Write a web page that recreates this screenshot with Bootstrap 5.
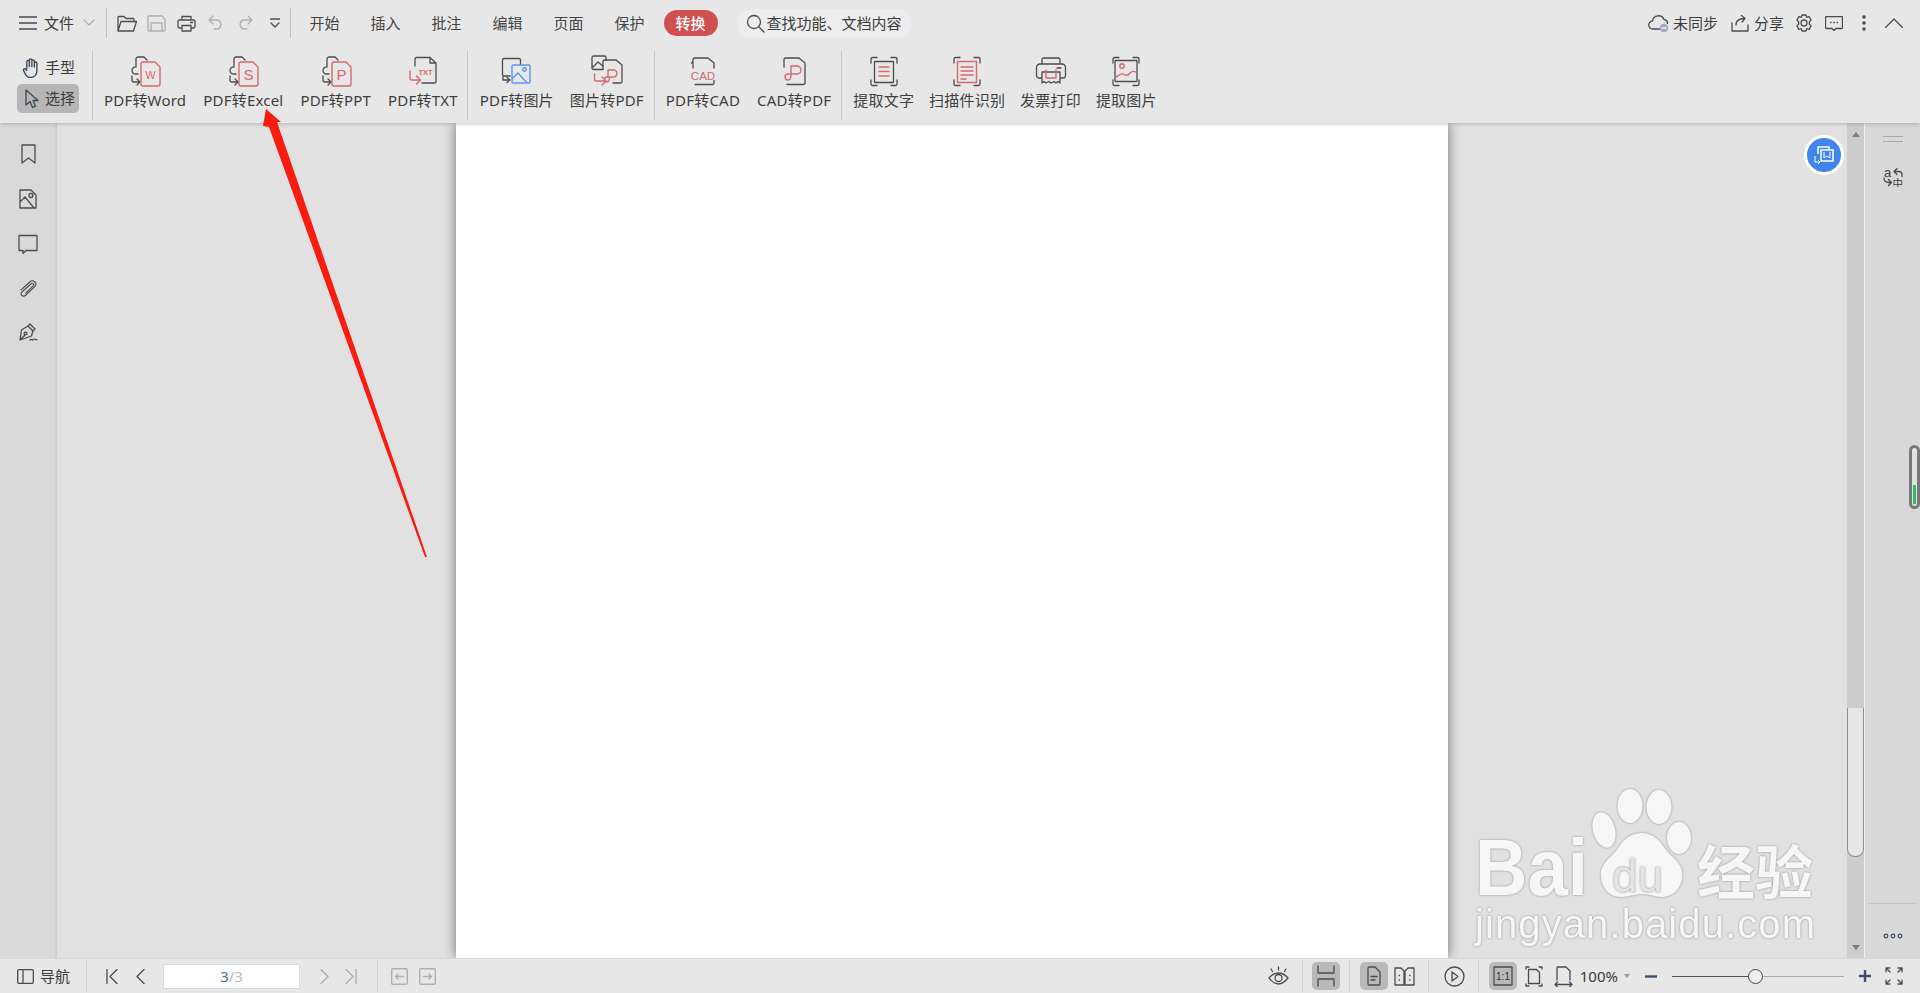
<!DOCTYPE html>
<html lang="zh-CN">
<head>
<meta charset="utf-8">
<title>PDF转换</title>
<link href="https://cdn.jsdelivr.net/npm/bootstrap@5.3.0/dist/css/bootstrap.min.css" rel="stylesheet">
<style>
html,body{height:100%;margin:0;overflow:hidden}
body{font-family:"Noto Sans","Noto Sans CJK SC",sans-serif;font-size:15px;color:#3c3c3c;background:#e7e7e7}
svg{display:block;flex:none}
.app{height:993px;position:relative}
.head{height:123px;background:#e7e7e7;box-shadow:0 1px 4px rgba(0,0,0,.2);position:relative;z-index:2;flex:none}
.line1{height:46px;padding-left:19px;padding-right:17px;line-height:20px}
.line2{height:77px;padding-top:5px}
.vsep{width:1px;background:#c8c8c8;flex:none}
.vsep.t{height:30px;background:#bdbdbd}
.vsep.r{height:69px}
.qa{width:29.6px;flex:none}
.tabx{width:30px;white-space:nowrap;flex:none;color:#444}
.tabs{gap:31px;margin-left:19px}
.pill{width:54px;height:26px;border-radius:13px;background:#d04f50;color:#fff;font-weight:500;margin-left:19px;flex:none}
.seek{width:175px;height:29px;border-radius:15px;background:#ededed;margin-left:19px;padding-left:9px;flex:none;white-space:nowrap}
.sidehand{width:92px;flex:none;padding-left:17px;height:70px;padding-top:2px;gap:2px}
.hs{height:29px;width:62px;border-radius:5px;padding-left:5px;gap:5px}
.hs.on{background:#b6b6b6}
.hs span{width:30px;white-space:nowrap}
.rib{gap:17px;margin:0 10px 0 11px;flex:none}
.rib.ra{margin-right:9px}
.rib.rb{gap:16px;margin-left:12px}
.rib.rd{gap:15px}
.ribitem{height:62px;white-space:nowrap;padding-top:4px}
.ribitem span{line-height:20px;margin-top:3px;color:#3f3f3f;letter-spacing:.2px}
.side{width:57px;flex:none;background:#d9d9d9;border-right:2px solid #cfd0d4;padding-top:21px;gap:25px}
.docarea{background:#e1e1e1;overflow:hidden;position:relative}
.sheet{width:992px;height:100%;background:#fff;box-shadow:0 0 11px rgba(0,0,0,.5)}
.bubble{position:absolute;left:1747px;top:12px;width:40px;height:40px;border-radius:50%;background:#4186f0;border:3px solid #fff}
.wmark{position:absolute;left:1363px;top:637px}
.wmark text{fill:#f6f6f6;font-family:"Liberation Sans",sans-serif;filter:drop-shadow(0 0 1.2px #8f8f8f)}
.wmark .hz{font-family:"Noto Sans CJK SC",sans-serif;font-weight:700}
.track{width:18px;flex:none;background:#ccc;border-right:1px solid #f2f2f2}
.up{padding-top:9px;height:585px}
.thumb{height:149px;background:#e6e6e6;border:1px solid #8d8d8d;border-top:0;border-radius:0 0 8px 8px;flex:none}
.rpanel{width:55px;flex:none;background:#d8d8d8;position:relative}
.grip{width:20px;height:6px;border-top:1px solid #a9a9a9;border-bottom:1px solid #a9a9a9;margin-top:13px;flex:none}
.trans{margin-top:25px}
.rule{width:49px;height:1px;background:#c6c6c6;margin-top:auto}
.more{margin-top:29px;margin-bottom:19px}
.gauge{position:absolute;left:44px;top:322px;width:11px;height:64px;border:3px solid #787878;border-radius:6px;background:#e2e2e2;padding:37px 1px 2px}
.gauge i{display:block;height:100%;background:#2fbd69}
.foot{height:35px;background:#e7e7e7;border-top:1px solid #d6d6d6;flex:none;padding-left:17px;padding-right:17px;position:relative;z-index:2}
.fsep{width:1px;height:30px;background:#d2d2d2;flex:none}
.pagebox{width:137px;height:25px;background:#fff;border:1px solid #d5dce9;text-align:center;line-height:22px;flex:none}
.pagebox b{font-weight:400;color:#4d6f9f}.pagebox i{font-style:normal;color:#bcbcbc}
.hl{width:28px;height:28px;border-radius:5px;background:#b9b9b9;flex:none}
.slide{width:172px;height:15px;flex:none;position:relative}
.slide::before{content:"";position:absolute;left:0;right:0;top:7px;height:1px;background:linear-gradient(90deg,#555 0 46%,#aaa 46% 100%)}
.slide i{position:absolute;left:76px;top:0;width:15px;height:15px;border-radius:50%;border:1px solid #444;background:#eee}
.nw{white-space:nowrap;flex:none}
.l2{margin-left:2px}.l4{margin-left:4px}.l5{margin-left:5px}.l6{margin-left:6px}.l7{margin-left:7px}.l8{margin-left:8px}.l9{margin-left:9px}.l10{margin-left:10px}.l11{margin-left:11px}.l12{margin-left:12px}.l13{margin-left:13px}.l14{margin-left:14px}.l15{margin-left:15px}.l16{margin-left:16px}.l18{margin-left:18px}.l19{margin-left:19px}.l20{margin-left:20px}
.pointer{position:absolute;left:0;top:0;z-index:3;pointer-events:none}
.ic{fill:none;stroke:#4c4c4c;stroke-width:1.3;stroke-linecap:round;stroke-linejoin:round}
.pk{fill:none;stroke:#d8686c;stroke-width:1.4;stroke-linecap:round;stroke-linejoin:round}
.bl{fill:none;stroke:#5f95f2;stroke-width:1.4;stroke-linejoin:round}
.lbl{font-family:"Liberation Sans",sans-serif;fill:#d8686c}
.gr{fill:none;stroke:#b0b0b0;stroke-width:1.4;stroke-linecap:round;stroke-linejoin:round}
.nv{fill:none;stroke:#3d4859;stroke-width:1.3;stroke-linecap:round;stroke-linejoin:round}
</style>
</head>
<body>
<svg width="0" height="0" class="position-absolute">
<symbol id="src" viewBox="0 0 32 32"><path class="ic" d="M7 12V4a2 2 0 0 1 2-2h6l3 3M7 12a3.5 3.5 0 0 0-4 3.5A3.5 3.5 0 0 0 7 19h2M3 21v4a2 2 0 0 0 2 2h6M8 24l3 3-3 3"/></symbol>
<symbol id="pdoc" viewBox="0 0 32 32"><path class="pk" d="M14 7h12l5 5v17a2 2 0 0 1-2 2H14a2 2 0 0 1-2-2V9a2 2 0 0 1 2-2z"/></symbol>
<symbol id="corners" viewBox="0 0 32 32"><path class="ic" d="M3 8V4a1.500 1.500 0 0 1 1.500-1.500H9M23 2.500h4.500A1.500 1.500 0 0 1 29 4v4M29 25v4a1.500 1.500 0 0 1-1.500 1.500H23M9 30.500H4.500A1.500 1.500 0 0 1 3 29v-4"/></symbol>
</svg>
<div class="app d-flex flex-column">
<header class="head d-flex flex-column">
 <div class="line1 d-flex align-items-center">
  <svg width="18" height="14" viewBox="0 0 18 14"><path class="ic" d="M0 1h18M0 7h18M0 13h18"/></svg>
  <span class="l7 nw">文件</span>
  <svg class="l9" width="12" height="8" viewBox="0 0 12 8"><path class="gr" d="M1 1l5 5 5-5"/></svg>
  <div class="vsep t l11"></div>
  <div class="d-flex l5">
   <div class="qa d-flex justify-content-center"><svg width="20" height="17" viewBox="0 0 20 17"><path class="ic" d="M1 15V2.500a1 1 0 0 1 1-1h5l2 2h7a1 1 0 0 1 1 1V6M1 16l3-9.500h15.500L16.500 16z"/></svg></div>
   <div class="qa d-flex justify-content-center"><svg width="19" height="17" viewBox="0 0 19 17"><path class="gr" d="M1 2a1 1 0 0 1 1-1h13l3 3v11a1 1 0 0 1-1 1H2a1 1 0 0 1-1-1zM4 16V8h11v8"/></svg></div>
   <div class="qa d-flex justify-content-center"><svg width="19" height="17" viewBox="0 0 19 17"><path class="ic" d="M5 5V1.500h9V5M5 13H2.500A1.500 1.500 0 0 1 1 11.500v-5A1.500 1.500 0 0 1 2.500 5h14A1.500 1.500 0 0 1 18 6.500v5a1.500 1.500 0 0 1-1.500 1.500H14M5 10.500h9v5.500H5zM13.500 7.500h2"/></svg></div>
   <div class="qa d-flex justify-content-center"><svg width="16" height="15" viewBox="0 0 16 15"><path class="gr" d="M5 1L1 5l4 4M1 5h9a5 5 0 0 1 0 9H6"/></svg></div>
   <div class="qa d-flex justify-content-center"><svg width="16" height="15" viewBox="0 0 16 15"><path class="gr" d="M11 1l4 4-4 4M15 5H6a5 5 0 0 0 0 9h4"/></svg></div>
   <div class="qa d-flex justify-content-center align-items-center"><svg width="10" height="11" viewBox="0 0 10 11"><path class="ic" d="M.5 1h9M1 5l4 4 4-4"/></svg></div>
  </div>
  <div class="vsep t"></div>
  <nav class="tabs d-flex"><span class="tabx">开始</span><span class="tabx">插入</span><span class="tabx">批注</span><span class="tabx">编辑</span><span class="tabx">页面</span><span class="tabx">保护</span></nav>
  <div class="pill d-flex align-items-center justify-content-center">转换</div>
  <div class="seek d-flex align-items-center">
   <svg width="19" height="19" viewBox="0 0 19 19"><circle class="ic" cx="8" cy="8" r="6.500"/><path class="ic" d="M13 13l5 5"/></svg><span class="l2">查找功能、文档内容</span>
  </div>
  <div class="ms-auto d-flex align-items-center">
   <svg width="21" height="19" viewBox="0 0 21 19"><path class="ic" d="M12 15H5a4 4 0 0 1-.5-8A6 6 0 0 1 16 5.500a4 4 0 0 1 3.500 4"/><circle cx="16" cy="14" r="4.300" fill="#a2abbd"/><path d="M13.500 14h5" stroke="#fff" stroke-width="1.300"/></svg>
   <span class="l4 nw">未同步</span>
   <svg class="l13" width="18" height="17" viewBox="0 0 18 17"><path class="ic" d="M1 8v8h16V10M5 10c0-5 4-6.500 9-6.500M10.500.5l3.500 3-3 3.500"/></svg>
   <span class="l5 nw">分享</span>
   <svg class="l11" width="18" height="18" viewBox="0 0 18 18"><path class="ic" d="M7 1h4l.7 2.400 2.400-.7 2 3.400-1.800 1.800v2.200l1.800 1.800-2 3.400-2.400-.7L11 17H7l-.7-2.400-2.400.7-2-3.400 1.800-1.800V7.900L1.900 6.100l2-3.400 2.400.7z"/><circle class="ic" cx="9" cy="9" r="3"/></svg>
   <svg class="l12" width="18" height="15" viewBox="0 0 18 15"><path class="ic" d="M1.500.5h15a1 1 0 0 1 1 1v10a1 1 0 0 1-1 1H11l-2 2-2-2H1.500a1 1 0 0 1-1-1v-10a1 1 0 0 1 1-1z"/><path class="ic" d="M5.500 6.500h.5M8.800 6.500h.5M12 6.500h.5"/></svg>
   <svg class="l19" width="4" height="16" viewBox="0 0 4 16"><circle cx="2" cy="2" r="1.800" fill="#4c4c4c"/><circle cx="2" cy="8" r="1.800" fill="#4c4c4c"/><circle cx="2" cy="14" r="1.800" fill="#4c4c4c"/></svg>
   <svg class="l19" width="18" height="10" viewBox="0 0 18 10"><path class="ic" d="M.5 9.500L9 1l8.500 8.500"/></svg>
  </div>
 </div>
 <div class="line2 d-flex align-items-start">
  <div class="sidehand d-flex flex-column">
   <div class="hs d-flex align-items-center">
    <svg width="18" height="20" viewBox="0 0 16 19"><path class="nv" d="M4 10V3.500a1.200 1.200 0 0 1 2.400 0V8M6.400 8V2a1.200 1.200 0 0 1 2.400 0v6M8.800 8V3a1.200 1.200 0 0 1 2.400 0v5.500M11.200 8.500V5a1.200 1.200 0 0 1 2.400 0v7.500a6 6 0 0 1-6 6H7c-2 0-3-1-4-2.500L1 12c-.8-1.500 1.300-2.500 2.200-1.200L4 12"/></svg>
    <span>手型</span>
   </div>
   <div class="hs on d-flex align-items-center">
    <svg width="18" height="20" viewBox="-3 0 18 20"><path class="nv" d="M1 1v15l4-3.500 2.500 6 3-1.300L8 11.500h5z"/></svg>
    <span>选择</span>
   </div>
  </div>
  <div class="vsep r"></div>
  <div class="rib ra d-flex">
   <div class="ribitem d-flex flex-column align-items-center">
    <svg width="32" height="32"><use href="#src"/><use href="#pdoc"/><text class="lbl" x="21.500" y="24" font-size="11" text-anchor="middle">W</text></svg><span>PDF转Word</span></div>
   <div class="ribitem d-flex flex-column align-items-center">
    <svg width="32" height="32"><use href="#src"/><use href="#pdoc"/><text class="lbl" x="21.500" y="25" font-size="15" text-anchor="middle">S</text></svg><span>PDF转Excel</span></div>
   <div class="ribitem d-flex flex-column align-items-center">
    <svg width="32" height="32"><use href="#src"/><use href="#pdoc"/><text class="lbl" x="21.500" y="25" font-size="15" text-anchor="middle">P</text></svg><span>PDF转PPT</span></div>
   <div class="ribitem d-flex flex-column align-items-center">
    <svg width="32" height="32" viewBox="0 0 32 32"><path class="ic" d="M8 11V4a1.500 1.500 0 0 1 1.500-1.500H23L29 8v18.500a1.500 1.500 0 0 1-1.500 1.500H15M23 2.500V8h6"/><path class="pk" d="M3 16v7a2 2 0 0 0 2 2h8M9.500 21l4 4-4 4"/><text class="lbl" x="18.500" y="20" font-size="7.500" font-weight="700" text-anchor="middle">TXT</text></svg><span>PDF转TXT</span></div>
  </div>
  <div class="vsep r"></div>
  <div class="rib rb d-flex">
   <div class="ribitem d-flex flex-column align-items-center">
    <svg width="32" height="32" viewBox="0 0 32 32"><path class="ic" d="M9 21H3a1.500 1.500 0 0 1-1.500-1.500V5A1.500 1.500 0 0 1 3 3.500h15A1.500 1.500 0 0 1 19.500 5v5M2 22v3h6M6 22.500l3 2.500-3 2.500"/><rect class="bl" x="11" y="10" width="18" height="18" rx="1"/><circle class="bl" cx="23.500" cy="14.500" r="1.700"/><path class="bl" d="M11 24l6-6 9 10"/></svg><span>PDF转图片</span></div>
   <div class="ribitem d-flex flex-column align-items-center">
    <svg width="32" height="32" viewBox="0 0 32 32"><path class="ic" d="M12 14.500H2.500A1.500 1.500 0 0 1 1 13V2.500A1.500 1.500 0 0 1 2.500 1h11A1.500 1.500 0 0 1 15 2.500V5M2 12l5-5 5 4"/><path class="ic" d="M12 14V6.500A1.500 1.500 0 0 1 13.500 5H25l6 5v16.500a1.500 1.500 0 0 1-1.500 1.500H22"/><path class="pk" d="M3.500 19v5a2 2 0 0 0 2 2h9M11 22l4 4-4 4M17 22v-7h5.500a3.500 3.500 0 0 1 0 7H16a2.500 2.500 0 0 0 0 5c2.500 0 2.500-3 2.500-5"/></svg><span>图片转PDF</span></div>
  </div>
  <div class="vsep r"></div>
  <div class="rib d-flex">
   <div class="ribitem d-flex flex-column align-items-center">
    <svg width="32" height="32" viewBox="0 0 32 32"><path class="ic" d="M6 13V4.500A1.500 1.500 0 0 1 7.500 3H21l6 5v5M27 25.500V28a1.500 1.500 0 0 1-1.500 1.500H8M6 6.500L4.500 8"/><text class="lbl" x="16" y="24.500" font-size="11.500" text-anchor="middle">CAD</text></svg><span>PDF转CAD</span></div>
   <div class="ribitem d-flex flex-column align-items-center">
    <svg width="32" height="32" viewBox="0 0 32 32"><path class="ic" d="M6 12V4.500A1.500 1.500 0 0 1 7.500 3H21l6 5v20a1.500 1.500 0 0 1-1.500 1.500H9"/><path class="pk" d="M13 20v-9h6a4 4 0 0 1 0 8h-9a3 3 0 0 0 0 6c3 0 3-3 3-5"/></svg><span>CAD转PDF</span></div>
  </div>
  <div class="vsep r"></div>
  <div class="rib rd d-flex">
   <div class="ribitem d-flex flex-column align-items-center">
    <svg width="32" height="32"><use href="#corners"/><rect class="ic" x="6.500" y="6.500" width="19" height="21" rx=".5"/><path class="pk" d="M11 12h10M11 16.500h10M11 21h10"/></svg><span>提取文字</span></div>
   <div class="ribitem d-flex flex-column align-items-center">
    <svg width="32" height="32"><use href="#corners"/><rect class="pk" x="6.500" y="6.500" width="19" height="21"/><path class="pk" d="M10 12h12M10 16h12M10 20h12M10 24h5"/></svg><span>扫描件识别</span></div>
   <div class="ribitem d-flex flex-column align-items-center">
    <svg width="32" height="32" viewBox="0 0 32 32"><path class="ic" d="M7 9V4.500A1.500 1.500 0 0 1 8.500 3h15A1.500 1.500 0 0 1 25 4.500V9M7 23H4a2.500 2.500 0 0 1-2.500-2.500v-8A3.500 3.500 0 0 1 5 9h22a3.500 3.500 0 0 1 3.500 3.500v8A2.500 2.500 0 0 1 28 23h-3M22 13h4M7 17h18v11l-2-1.500-2 1.500-2-1.500-3 1.500-2-1.500-3 1.500-2-1.500-2 1.500z"/><path class="pk" d="M11 15v8h10v-8"/></svg><span>发票打印</span></div>
   <div class="ribitem d-flex flex-column align-items-center">
    <svg width="32" height="32"><use href="#corners"/><rect class="ic" x="5" y="5.500" width="22" height="21" rx=".5"/><circle class="pk" cx="12" cy="11" r="2.200"/><path class="pk" d="M6 22c3-1 4-4 7-3 3 2 5 2 7-1 2-2 4-2 6-1"/></svg><span>提取图片</span></div>
  </div>
 </div>
</header>

<main class="flex-fill d-flex overflow-hidden">
 <aside class="side d-flex flex-column align-items-center">
  <svg width="20" height="20" viewBox="0 0 20 20"><path class="ic" d="M4 1h13v18l-6.500-5L4 19z"/></svg>
  <svg width="20" height="20" viewBox="0 0 20 20"><path class="ic" d="M2 1h11l5 5v13H2zM2 13l5-5 9 11"/><circle class="ic" cx="13" cy="6.500" r="2"/></svg>
  <svg width="20" height="20" viewBox="0 0 20 20"><path class="ic" d="M1 1.500h18v15H8l-3 3v-3H1z"/></svg>
  <svg width="20" height="19" viewBox="-1 -1 23 21"><path class="ic" d="M8 14.500L16.500 6.500C18 5 16 2.500 14 4L3.500 13.500C.5 16.500 5 20 8 17L18.500 7C22 3 16-1.500 12.500 2L2.500 11"/></svg>
  <svg width="20" height="20" viewBox="0 0 20 20"><path class="ic" d="M12 1l5 5-2 2-5-5zM15 8l-1.500 5L2 17l1.500-10L10 3M2.500 16.500l4-4"/><circle class="ic" cx="7.500" cy="10.500" r="1.400"/><path class="ic" d="M12 17c1.500-2 2.500 1 3.500-.5s1.500 1 3.500 0"/></svg>
 </aside>
 <section class="docarea flex-fill d-flex justify-content-center">
  <div class="sheet"></div>
  <div class="bubble d-flex align-items-center justify-content-center">
   <svg width="22" height="20" viewBox="0 0 22 20"><path d="M5 9V2h11v3" fill="none" stroke="#fff" stroke-width="1.500"/><rect x="8" y="5" width="12" height="11" fill="#4186f0" stroke="#fff" stroke-width="1.500"/><path d="M11 7v6l3-2 3 2V7" fill="none" stroke="#fff"/><path d="M2 11v6h5M5 15l2 2-2 2" fill="none" stroke="#fff"/></svg>
  </div>
  <svg class="wmark" width="420" height="198" viewBox="0 0 420 198">
   <g fill="#f6f6f6" style="filter:drop-shadow(0 0 1.200px #8f8f8f)">
    <ellipse cx="210" cy="46" rx="12.500" ry="17"/><ellipse cx="239" cy="47" rx="12.500" ry="17"/>
    <ellipse cx="184" cy="70" rx="11" ry="18" transform="rotate(-15 184 70)"/><ellipse cx="259" cy="78" rx="12" ry="16"/>
    <path d="M222 73c12 0 18 8 24 17 6 7 14 12 16 21 2 14-7 26-20 26-7 0-13-3-20-3s-14 3-21 3c-13 0-21-11-20-25 1-9 9-14 15-21 6-9 12-18 26-18z"/>
   </g>
   <text x="55" y="135" font-size="79" font-weight="700" textLength="113" lengthAdjust="spacingAndGlyphs">Bai</text>
   <text x="192" y="132" font-size="46" font-weight="400" textLength="51" style="fill:#e4e4e4">du</text>
   <text class="hz" x="277" y="134" font-size="58" textLength="116">经验</text>
   <text x="55" y="178" font-size="40" textLength="340">jingyan.baidu.com</text>
  </svg>
 </section>
 <div class="track d-flex flex-column">
  <div class="up d-flex justify-content-center"><svg width="8" height="5" viewBox="0 0 8 5"><path d="M4 0l4 5H0z" fill="#7b7b7b"/></svg></div>
  <div class="thumb"></div>
  <div class="flex-fill d-flex justify-content-center align-items-end pb-2"><svg width="8" height="5" viewBox="0 0 8 5"><path d="M4 5l4-5H0z" fill="#7b7b7b"/></svg></div>
 </div>
 <aside class="rpanel d-flex flex-column align-items-center">
  <div class="grip"></div>
  <svg class="trans" width="20" height="20" viewBox="0 0 20 20"><text x="1" y="10" font-size="13" font-family="Liberation Sans" fill="#3d3d3d">a</text><text x="9.500" y="19.500" font-size="10.500" font-family="Noto Sans CJK SC" fill="#3d3d3d">中</text><path class="ic" d="M14 1.500L11 4.500l3 3M11 4.500h5a3 3 0 0 1 3 3v2M1 11c0 3 2 4.500 5 4.500h2M5.500 12.500l3 3-3 3"/></svg>
  <div class="rule"></div>
  <svg class="more" width="20" height="6" viewBox="0 0 20 6"><circle cx="3" cy="3" r="1.800" fill="none" stroke="#3c4a60" stroke-width="1.200"/><circle cx="10" cy="3" r="1.800" fill="none" stroke="#3c4a60" stroke-width="1.200"/><circle cx="17" cy="3" r="1.800" fill="none" stroke="#3c4a60" stroke-width="1.200"/></svg>
  <div class="gauge"><i></i></div>
 </aside>
</main>

<footer class="foot d-flex align-items-center">
 <svg width="17" height="15" viewBox="0 0 17 15"><rect class="ic" x=".7" y=".7" width="15.600" height="13.600" rx="1"/><path class="ic" d="M6 1v13"/></svg>
 <span class="l6 nw">导航</span>
 <div class="fsep l16"></div>
 <svg class="l19" width="12" height="15" viewBox="0 0 12 15"><path class="ic" d="M1 .5v14M11 .5L4 7.500l7 7"/></svg>
 <svg class="l18" width="9" height="15" viewBox="0 0 9 15"><path class="ic" d="M8 .5L1 7.500l7 7"/></svg>
 <div class="pagebox l18"><b>3</b><i>/3</i></div>
 <svg class="l20" width="9" height="15" viewBox="0 0 9 15"><path class="gr" d="M1 .5l7 7-7 7"/></svg>
 <svg class="l16" width="12" height="15" viewBox="0 0 12 15"><path class="gr" d="M11 .5v14M1 .5l7 7-7 7"/></svg>
 <div class="fsep l20"></div>
 <svg class="l13" width="17" height="17" viewBox="0 0 17 17"><rect class="gr" x=".7" y=".7" width="15.600" height="15.600" rx="1"/><path class="gr" d="M12.500 8.500h-8M7 6L4.500 8.500 7 11"/></svg>
 <svg class="l11" width="17" height="17" viewBox="0 0 17 17"><rect class="gr" x=".7" y=".7" width="15.600" height="15.600" rx="1"/><path class="gr" d="M4.500 8.500h8M10 6l2.500 2.500L10 11"/></svg>
 <div class="ms-auto d-flex align-items-center">
  <svg width="21" height="20" viewBox="0 0 21 20"><path class="ic" d="M1 12c2.500-3 5.500-5 9.500-5s7 2 9.500 5c-2.500 3-5.500 6-9.500 6S3.500 15 1 12z"/><circle class="ic" cx="10.500" cy="12" r="3.500"/><path class="ic" d="M10.500 1v3M3 3l1.500 2.500M18 3l-1.500 2.500"/></svg>
  <div class="fsep l13"></div>
  <div class="hl l9 d-flex align-items-center justify-content-center"><svg width="18" height="22" viewBox="0 0 18 22"><path class="ic" d="M1 8V1M17 8V1M1 8h16M1 21v-7h16v7"/></svg></div>
  <div class="fsep l9"></div>
  <div class="hl l10 d-flex align-items-center justify-content-center"><svg width="14" height="20" viewBox="0 0 14 20"><path class="ic" d="M1 2a1 1 0 0 1 1-1h6l5 5v12a1 1 0 0 1-1 1H2a1 1 0 0 1-1-1zM4 10.500h6M4 14h4"/></svg></div>
  <svg class="l6" width="21" height="20" viewBox="0 0 21 20"><path class="ic" d="M1 2h6l3 3v14H1zM11 5l3-3h6v17h-9zM5 9.500h.5M5 14h.5M15.500 9.500h.5M15.500 14h.5"/></svg>
  <div class="fsep l13"></div>
  <svg class="l15" width="21" height="21" viewBox="0 0 21 21"><circle class="ic" cx="10.500" cy="10.500" r="9.500"/><path class="ic" d="M8 6l6 4.500L8 15z"/></svg>
  <div class="fsep l13"></div>
  <div class="hl l10 d-flex align-items-center justify-content-center"><svg width="20" height="20" viewBox="0 0 20 20"><rect class="ic" x="1" y="1" width="18" height="18"/><text x="10" y="14" font-size="10" font-family="Liberation Sans" fill="#333" text-anchor="middle">1:1</text></svg></div>
  <svg class="l8" width="18" height="21" viewBox="0 0 18 21"><path class="ic" d="M3.500 3.500h8l3 3v11h-11zM1 3V1h3M17 3V1h-3M1 18v2h3M17 18v2h-3"/></svg>
  <svg class="l11" width="19" height="21" viewBox="0 0 19 21"><path class="ic" d="M3 14V2a1 1 0 0 1 1-1h8l4 4v9M1 18.500h17M3.500 16L1 18.500 3.500 21M15.500 16l2.500 2.500-2.500 2.500"/></svg>
  <span class="l7 nw">100%</span>
  <svg class="l6" width="6" height="4" viewBox="0 0 6 4"><path d="M0 0h6L3 4z" fill="#999"/></svg>
  <svg class="l15" width="12" height="3" viewBox="0 0 12 3"><path d="M0 1.500h12" stroke="#3d4f6f" stroke-width="2.400"/></svg>
  <div class="slide l15"><i></i></div>
  <svg class="l15" width="12" height="12" viewBox="0 0 12 12"><path d="M0 6h12M6 0v12" stroke="#3d4f6f" stroke-width="2.400"/></svg>
  <svg class="l14" width="18" height="18" viewBox="0 0 18 18"><path class="ic" d="M1 1l4 4M1 5V1h4M17 1l-4 4M17 5V1h-4M1 17l4-4M1 13v4h4M17 17l-4-4M17 13v4h-4"/></svg>
 </div>
</footer>

<svg class="pointer" width="1920" height="993" viewBox="0 0 1920 993"><polygon points="266,109 281,122 277,122 427,557 425,557 269,127 263,126" fill="#fb1c10"/></svg>
</div>
<script src="https://cdn.jsdelivr.net/npm/bootstrap@5.3.0/dist/js/bootstrap.bundle.min.js"></script>
</body>
</html>
